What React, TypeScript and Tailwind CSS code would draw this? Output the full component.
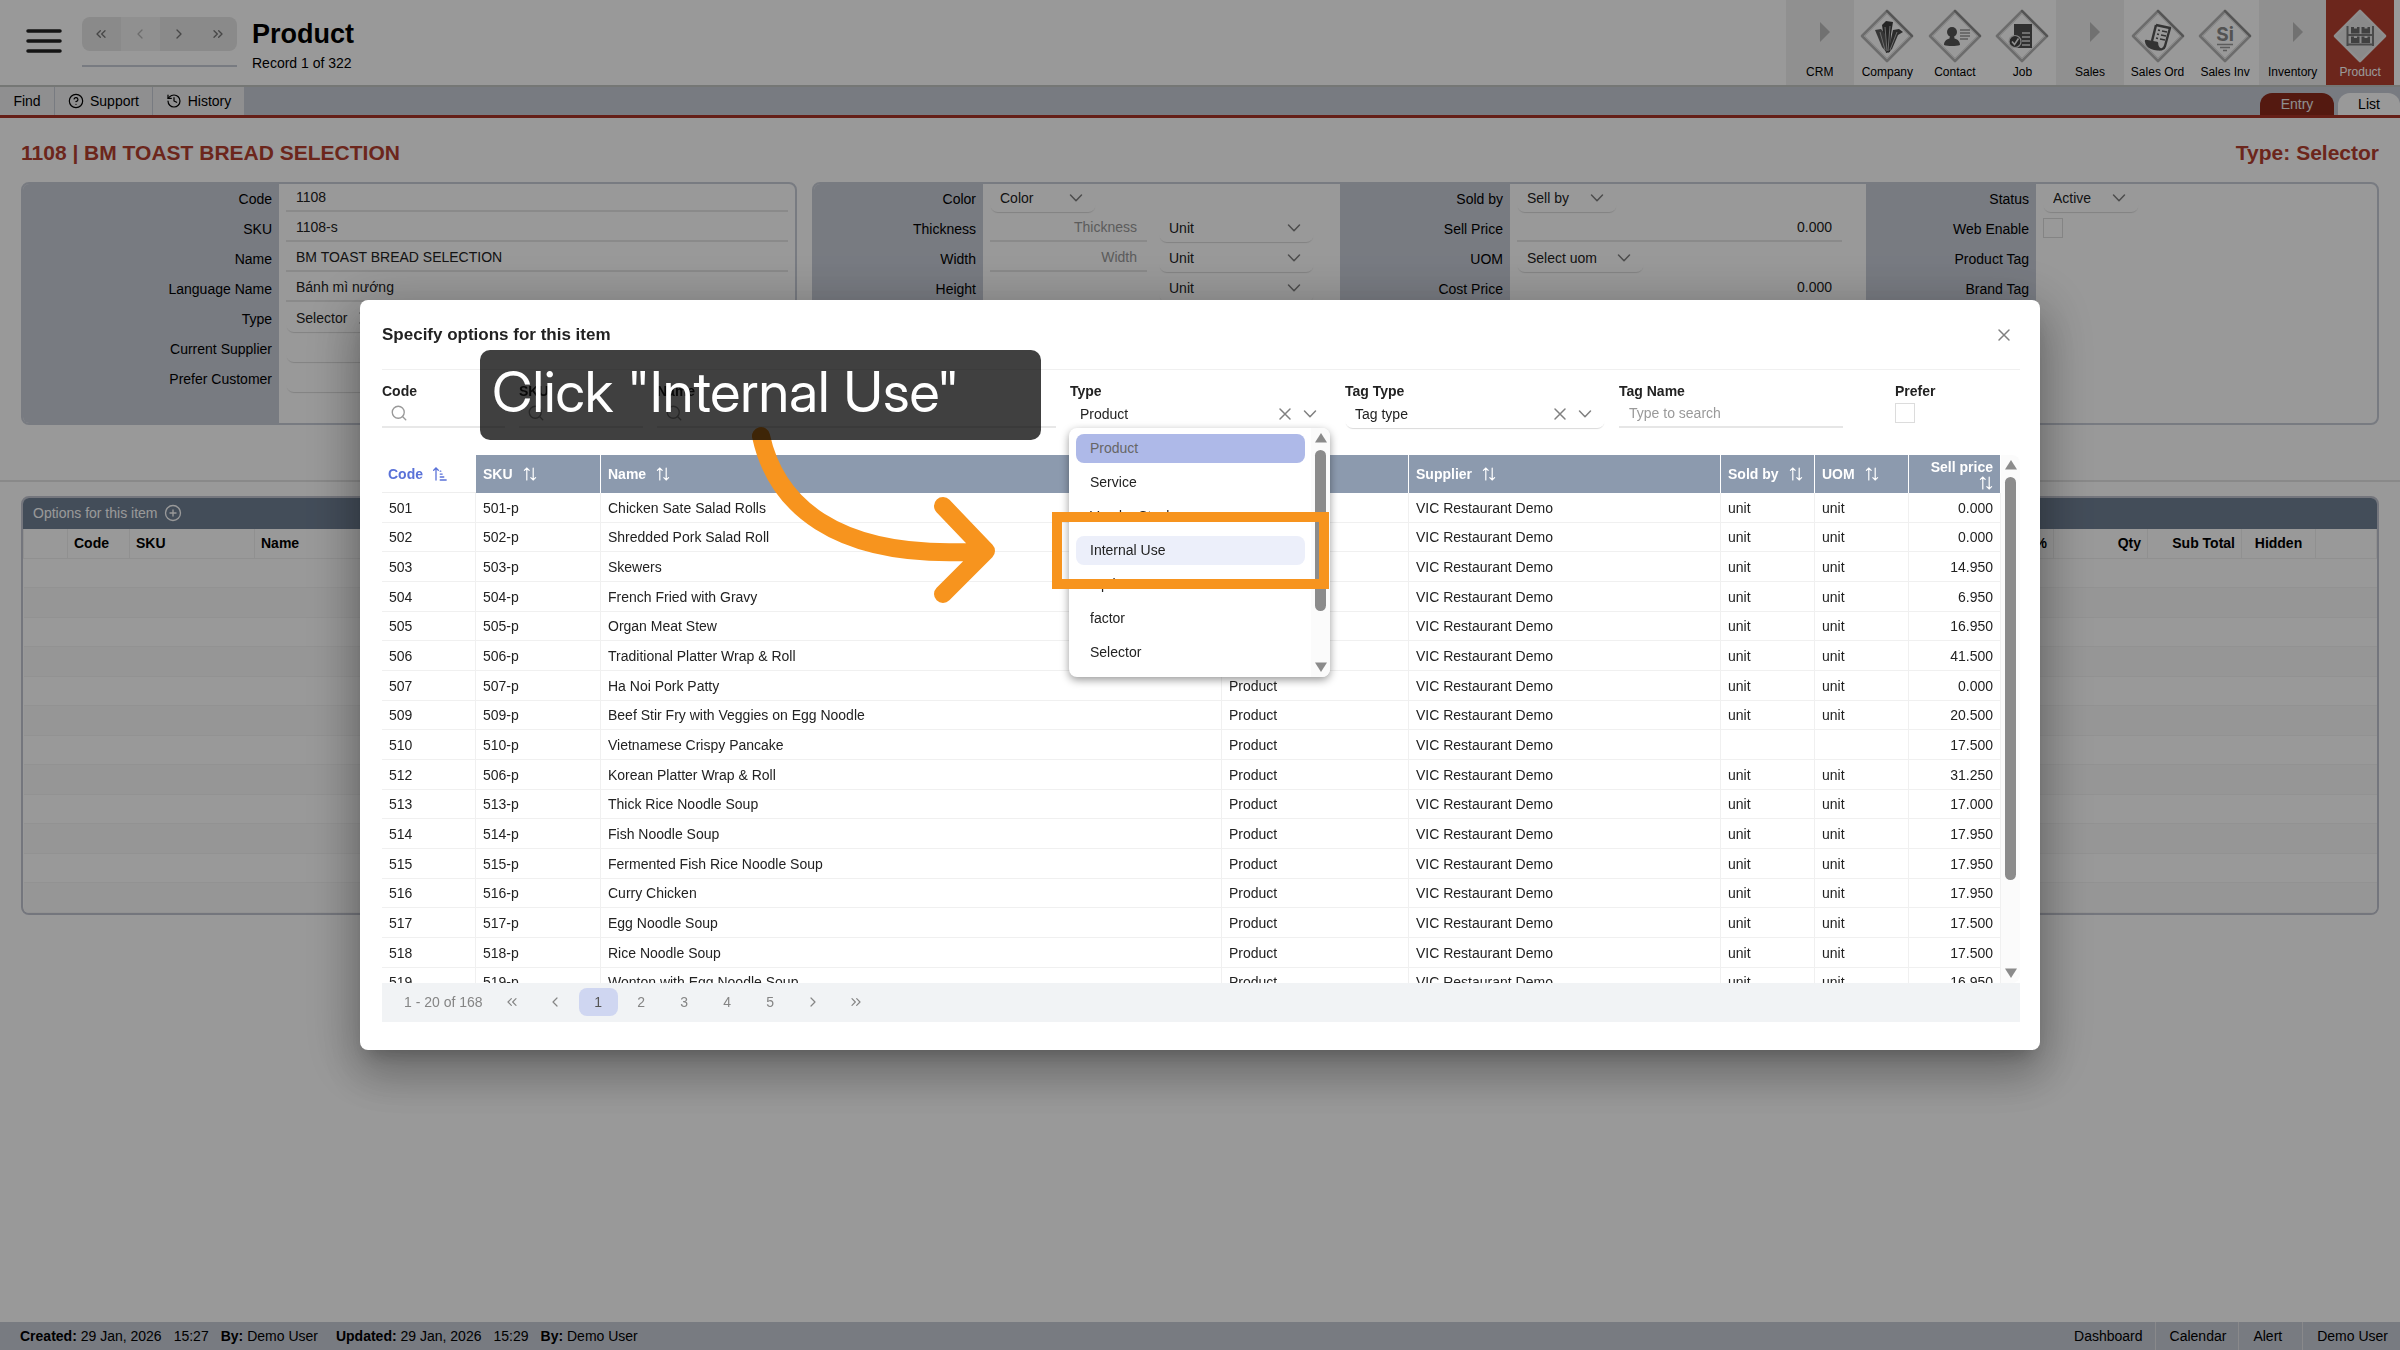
import React from "react";
import { ChevronLeft, ChevronRight, ChevronsLeft, ChevronsRight, CircleHelp, CirclePlus, History, Search } from "lucide-react";

const products: string[][] = [
  ["501", "501-p", "Chicken Sate Salad Rolls", "unit", "0.000"],
  ["502", "502-p", "Shredded Pork Salad Roll", "unit", "0.000"],
  ["503", "503-p", "Skewers", "unit", "14.950"],
  ["504", "504-p", "French Fried with Gravy", "unit", "6.950"],
  ["505", "505-p", "Organ Meat Stew", "unit", "16.950"],
  ["506", "506-p", "Traditional Platter Wrap & Roll", "unit", "41.500"],
  ["507", "507-p", "Ha Noi Pork Patty", "unit", "0.000"],
  ["509", "509-p", "Beef Stir Fry with Veggies on Egg Noodle", "unit", "20.500"],
  ["510", "510-p", "Vietnamese Crispy Pancake", "", "17.500"],
  ["512", "506-p", "Korean Platter Wrap & Roll", "unit", "31.250"],
  ["513", "513-p", "Thick Rice Noodle Soup", "unit", "17.000"],
  ["514", "514-p", "Fish Noodle Soup", "unit", "17.950"],
  ["515", "515-p", "Fermented Fish Rice Noodle Soup", "unit", "17.950"],
  ["516", "516-p", "Curry Chicken", "unit", "17.950"],
  ["517", "517-p", "Egg Noodle Soup", "unit", "17.500"],
  ["518", "518-p", "Rice Noodle Soup", "unit", "17.500"],
  ["519", "519-p", "Wonton with Egg Noodle Soup", "unit", "16.950"],
];

/* ---------- icons ---------- */

function SortIcon() {
  return (
    <svg aria-hidden="true" viewBox="0 0 14 14" className="h-[14px] w-[14px] shrink-0" fill="none" stroke="currentColor" strokeWidth="1.2" strokeLinecap="round">
      <path d="M3.8 13V1M1.4 3.4 3.8 1l2.4 2.4M10.2 1v12M7.8 10.6l2.4 2.4 2.4-2.4" />
    </svg>
  );
}

function SortAmountIcon() {
  return (
    <svg aria-hidden="true" viewBox="0 0 14 14" className="h-[14px] w-[14px] shrink-0" fill="none" stroke="currentColor" strokeWidth="1.3" strokeLinecap="round">
      <path d="M3 13V1M.7 3.3 3 1l2.3 2.3M7.2 4.2h.6M7.2 7.1h2M7.2 10h3.6M7.2 13h6" />
    </svg>
  );
}

function DownIcon({ className }: { className: string }) {
  return (
    <svg aria-hidden="true" viewBox="0 0 16 16" className={`h-4 w-4 text-[#808080] ${className}`} fill="none" stroke="currentColor" strokeWidth="1.5" strokeLinecap="round" strokeLinejoin="round">
      <path d="M2.5 5 8 10.800 13.500 5" />
    </svg>
  );
}

function CrossIcon({ className }: { className: string }) {
  return (
    <svg aria-hidden="true" viewBox="0 0 16 16" className={`h-4 w-4 text-[#808080] ${className}`} fill="none" stroke="currentColor" strokeWidth="1.5" strokeLinecap="round">
      <path d="M3 3l10 10M13 3 3 13" />
    </svg>
  );
}

function Diamond({ children, solid }: { children: React.ReactNode; solid?: boolean }) {
  return (
    <svg aria-hidden="true" viewBox="0 0 56 56" className="h-[56px] w-[56px]">
      <path d="M28 3 53 28 28 53 3 28Z" fill={solid ? "#e6e6e6" : "none"} stroke={solid ? "#ededed" : "#b4b4b4"} strokeWidth="2.6" strokeLinejoin="round" />
      {!solid && <path d="M28 3 53 28" stroke="#8c8c8c" strokeWidth="2.4" strokeLinecap="round" />}
      {!solid && <path d="M28 5.8 50.2 28 28 50.2 5.8 28Z" fill="none" stroke="#e0e0e0" strokeWidth="1" />}
      {children}
    </svg>
  );
}

const companyArt = (
  <g>
    <path d="M23 17l4-4 7 1-2 12-1 18-4 1-2-14z" fill="#3f3f3f" />
    <path d="M16 22l6-1 4 5 2 19-5-6z" fill="#5a5a5a" />
    <path d="M34 22l6-1 4 3-5 3-6 14-4 4z" fill="#4a4a4a" />
    <path d="M26 19l2 24M31 18l-2 25M21 24l5 18M38 24l-7 18" stroke="#b5b5b5" strokeWidth="1" fill="none" />
  </g>
);
const contactArt = (
  <g>
    <circle cx="25" cy="24" r="5" fill="#555" />
    <path d="M17 37c0-5 4-6 5.500-6.500L23 27h4l.5 3.500C29 31 33 32 33 37c-4 1.400-12 1.400-16 0z" fill="#555" />
    <path d="M33 22h10M33 25h10M33 28h10M33 31h8" stroke="#999" strokeWidth="1.400" />
  </g>
);
const jobArt = (
  <g>
    <path d="M20 16h18v24H20z" fill="#505050" />
    <path d="M28 25h8M28 29h8M28 33h8M28 37h8" stroke="#ddd" strokeWidth="1.500" />
    <circle cx="21" cy="33.500" r="6" fill="#444" stroke="#ddd" strokeWidth="1.200" />
    <path d="M18 33.500l2.500 3 4-6" fill="none" stroke="#eee" strokeWidth="1.600" />
  </g>
);
const orderArt = (
  <g fill="none" stroke="#555" strokeWidth="2.400" strokeLinejoin="round">
    <path d="M26 17l14 3-5 18c-1 3-4 4-6 3" />
    <path d="M26 17l-4 16" />
    <path d="M16 33l11 2c0 3 1 5 3 6-5 1-13-1-14-8z" fill="#555" />
    <path d="M28 22l2 .5m2 .5 5 1M27 26l2 .5m2 .5 5 1M26 30l2 .5m2 .5 5 1" strokeWidth="1.500" />
  </g>
);
const invoiceArt = (
  <g>
    <text x="28" y="33" textAnchor="middle" fontFamily="Inter, sans-serif" fontWeight="700" fontSize="19" fill="#8a8a8a">Si</text>
    <path d="M20 36.500h16M23 39.500h10M26 42.500h4" stroke="#999" strokeWidth="1.300" />
  </g>
);
const productArt = (
  <g>
    <path d="M15.500 18v20M41 18v20M15 27h27M15 36.500h27" stroke="#7c7c7c" strokeWidth="2" />
    <path d="M19 19h3v1.500h3V19h2.500v6.500H19zM29.500 19h3v1.500h3V19H38v6.500h-8.500zM19 28.500h3V30h3v-1.500h2.500V35H19zM29.500 28.500h3V30h3v-1.500H38V35h-8.500z" fill="#6b6b6b" />
  </g>
);

const modules: { name: string; art?: React.ReactNode; active?: boolean }[] = [
  { name: "CRM" },
  { name: "Company", art: companyArt },
  { name: "Contact", art: contactArt },
  { name: "Job", art: jobArt },
  { name: "Sales" },
  { name: "Sales Ord", art: orderArt },
  { name: "Sales Inv", art: invoiceArt },
  { name: "Inventory" },
  { name: "Product", art: productArt, active: true },
];

/* ---------- form pieces ---------- */

const lineInput = "h-[28px] border-b-2 border-[#e6e6e6] bg-transparent px-2.5 outline-none placeholder:text-[#999]";

function Pick({ id, value, width, clear, bare }: { id: string; value: string; width: string; clear?: boolean; bare?: boolean }) {
  return (
    <div className={`relative h-[28px] rounded-lg ${bare ? "" : "shadow-[0_2px_1px_-1px_#dadada]"} ${width}`}>
      <select id={id} aria-label={id} defaultValue={value} className="h-full w-full appearance-none bg-transparent pl-2.5 pr-8 outline-none">
        <option>{value}</option>
      </select>
      {clear && <CrossIcon className="pointer-events-none absolute right-[37px] top-1.5" />}
      <DownIcon className="pointer-events-none absolute right-3 top-1.5" />
    </div>
  );
}

function Tick({ id }: { id: string }) {
  return <input id={id} type="checkbox" className="block h-5 w-5 appearance-none border border-[#dcdcdc] bg-white" />;
}

function Fields({ rows, labels, className }: { rows: [string, string, React.ReactNode][]; labels: string; className?: string }) {
  return (
    <div className={`flex ${className ?? ""}`}>
      <div className={`shrink-0 bg-[#c8cdd8] ${labels}`}>
        {rows.map(([id, label]) => (
          <label key={label} htmlFor={id} className="flex h-[30px] items-center justify-end pr-[7px] text-black">{label}</label>
        ))}
      </div>
      <div className="min-w-0 flex-1 px-[7px]">
        {rows.map(([, label, field]) => (
          <div key={label} className="flex h-[30px] items-start">{field}</div>
        ))}
      </div>
    </div>
  );
}

const measure = (id: string, label: string): [string, string, React.ReactNode] => [
  id,
  label,
  <>
    <input id={id} placeholder={label === "Height" ? "" : label} className={`${lineInput} w-[157px] text-right`} />
    <div className="ml-3"><Pick id={`${id}-unit`} value="Unit" width="w-[155px]" /></div>
  </>,
];

/* ---------- page ---------- */

function Header() {
  return (
    <header className="flex h-[87px] items-stretch border-b-2 border-[#c4c7c4]">
      <button aria-label="Menu" className="ml-[22px] mr-4 flex h-[82px] w-11 items-center justify-center text-[#222]">
        <svg aria-hidden="true" viewBox="0 0 36 26" className="h-[26px] w-9"><path d="M2 3h32M2 13h32M2 23h32" stroke="#222" strokeWidth="3.500" strokeLinecap="round" /></svg>
      </button>
      <div className="w-[155px]">
        <div className="mt-[17px] grid h-[34px] grid-cols-4 overflow-hidden rounded-lg bg-[#e6e6e6] text-[#777]">
          <button aria-label="First record" className="flex items-center justify-center"><ChevronsLeft className="h-4 w-4" /></button>
          <button aria-label="Previous record" className="flex items-center justify-center bg-[#f1f1f1] text-[#b5b5b5]"><ChevronLeft className="h-4 w-4" /></button>
          <button aria-label="Next record" className="flex items-center justify-center"><ChevronRight className="h-4 w-4" /></button>
          <button aria-label="Last record" className="flex items-center justify-center"><ChevronsRight className="h-4 w-4" /></button>
        </div>
        <div className="mt-3.5 h-0.5 bg-[#c8cdd8]" />
      </div>
      <div className="ml-[15px] pt-[18px] text-black">
        <h1 className="text-[27px] font-bold leading-8">Product</h1>
        <p className="mt-1 leading-[18px]">Record 1 of 322</p>
      </div>
      <nav className="ml-auto mr-1.5 grid w-[608px] grid-cols-9">
        {modules.map((m) => (
          <a key={m.name} href={`#${m.name}`} className={`flex flex-col items-center pt-2 text-[12px] leading-4 ${m.active ? "bg-[#b5402f] text-white" : m.art ? "text-black" : "bg-[#f1f1f1] text-black"}`}>
            {m.art ? (
              <Diamond solid={m.active}>{m.art}</Diamond>
            ) : (
              <svg aria-hidden="true" viewBox="0 0 56 56" className="h-[56px] w-[56px]"><path d="M28 14l10 10-10 10z" fill="#bcbcbc" /></svg>
            )}
            <span>{m.name}</span>
          </a>
        ))}
      </nav>
    </header>
  );
}

function Toolbar() {
  return (
    <div className="flex h-[31px] items-end justify-between border-b-[3px] border-[#a83527] bg-[#c8cdd8] text-black">
      <div className="flex h-full gap-px">
        <button className="w-[54px] bg-[#efeff1]">Find</button>
        <button className="flex w-[97px] items-center justify-center gap-1.5 bg-[#efeff1]"><CircleHelp className="h-4 w-4" strokeWidth={1.8} />Support</button>
        <button className="flex w-[91px] items-center justify-center gap-1.5 bg-[#efeff1]"><History className="h-4 w-4" strokeWidth={1.8} />History</button>
      </div>
      <div className="flex h-[22px] gap-1">
        <button className="w-[74px] rounded-t-xl bg-[#8d2a1c] text-[#eee]">Entry</button>
        <button className="w-[62px] rounded-t-xl bg-white">List</button>
      </div>
    </div>
  );
}

function OptionsPanel() {
  return (
    <section className="mx-[21px] overflow-hidden rounded-lg border-2 border-[#c2c5d0]">
      <div className="flex h-[31px] items-center gap-1.5 bg-[#708095] pb-px pl-2.5 text-white">
        <h3>Options for this item</h3>
        <button aria-label="Add option"><CirclePlus className="h-[18px] w-[18px]" strokeWidth={1.8} /></button>
      </div>
      <table className="w-full table-fixed border-collapse text-black">
        <colgroup>
          <col className="w-[44px]" /><col className="w-[62px]" /><col className="w-[125px]" /><col /><col className="w-[200px]" /><col className="w-[94px]" /><col className="w-[94px]" /><col className="w-[74px]" /><col className="w-[61px]" />
        </colgroup>
        <thead>
          <tr className="h-[29px] font-bold [&>th]:border [&>th]:border-t-0 [&>th]:border-[#f0f0f0] [&>th]:px-1.5">
            <th />
            <th className="text-left">Code</th>
            <th className="text-left">SKU</th>
            <th className="text-left">Name</th>
            <th className="text-right">Disc %</th>
            <th className="text-right">Qty</th>
            <th className="text-right">Sub Total</th>
            <th>Hidden</th>
            <th />
          </tr>
        </thead>
        <tbody>
          {Array.from({ length: 12 }, (_, i) => (
            <tr key={i} className="border-b border-[#f4f4f4] odd:h-[29px] even:h-[30px] even:bg-[#fbfbfb]"><td colSpan={9} /></tr>
          ))}
        </tbody>
      </table>
    </section>
  );
}

function Footer() {
  const links = ["Dashboard", "Calendar", "Alert", "Demo User"];
  return (
    <footer className="flex h-[28px] items-center bg-[#c8cdd8] pl-5 text-black">
      <p className="flex gap-3">
        <span><b>Created:</b> 29 Jan, 2026</span><span>15:27</span><span className="mr-1.5"><b>By:</b> Demo User</span>
        <span><b>Updated:</b> 29 Jan, 2026</span><span>15:29</span><span><b>By:</b> Demo User</span>
      </p>
      <nav className="ml-auto flex h-full divide-x divide-[#e4e4e8]">
        {links.map((l) => (
          <a key={l} href={`#${l}`} className={`flex items-center ${l === "Alert" ? "pl-3.5 pr-5" : "pl-3.5 pr-3"}`}>{l}</a>
        ))}
      </nav>
    </footer>
  );
}

/* ---------- dialog ---------- */

function Field({ id, label, children }: { id: string; label: string; children: React.ReactNode }) {
  return (
    <div className="relative pr-3.5">
      <label htmlFor={id} className="block h-[18px] font-bold leading-[18px] text-[#222]">{label}</label>
      {children}
    </div>
  );
}

function SearchBox({ id }: { id: string }) {
  return (
    <div className="relative">
      <input id={id} className="h-[28px] w-full border-b-2 border-[#e8e8e8] pl-8 outline-none" />
      <Search aria-hidden="true" className="absolute left-2 top-1 h-[18px] w-[18px] text-[#999]" strokeWidth={1.8} />
    </div>
  );
}

function ScrollBar({ thumb }: { thumb: string }) {
  return (
    <div aria-hidden="true" className="flex w-[19px] shrink-0 flex-col items-center rounded-r-lg bg-[#fbfbfb] py-[5px] text-[#8b8b8b]">
      <svg viewBox="0 0 12 10" className="h-2.5 w-3"><path d="M6 0l6 9.500H0z" fill="currentColor" /></svg>
      <div className={`mt-[7px] w-[11px] rounded-full bg-[#8b8b8b] ${thumb}`} />
      <svg viewBox="0 0 12 10" className="mt-auto h-2.5 w-3"><path d="M0 .5h12L6 10z" fill="currentColor" /></svg>
    </div>
  );
}

const typeOptions = ["Product", "Service", "Vendor Stock", "Internal Use", "Options", "factor", "Selector"];

function TypeMenu() {
  return (
    <div className="absolute -left-px top-[46px] z-10 flex h-[249px] w-[261px] rounded-lg bg-white shadow-[0_3px_8px_rgba(0,0,0,0.4)]">
      <div role="listbox" aria-label="Type" className="flex-1 space-y-[5px] py-1.5 pl-[7px] pr-1.5">
        {typeOptions.map((o) => (
          <button
            key={o}
            role="option"
            aria-selected={o === "Product"}
            className={`relative block h-[29px] w-full rounded-lg pb-0.5 pl-3.5 text-left ${o === "Product" ? "bg-[#aeb9e8] text-[#666]" : o === "Internal Use" ? "z-10 bg-[#eceffa]" : ""}`}
          >
            {o}
            {o === "Internal Use" && <span className="pointer-events-none absolute -bottom-6 -left-6 -right-6 -top-6 border-10 border-[#f7941e]" />}
          </button>
        ))}
      </div>
      <ScrollBar thumb="h-[161px]" />
    </div>
  );
}

function Head({ children, stacked }: { children: string; stacked?: boolean }) {
  return (
    <th className={`border-r border-white bg-[#8c9aae] px-[7px] font-bold text-white ${stacked ? "text-right" : "text-left"}`}>
      <span className={stacked ? "flex flex-col items-end leading-[18px]" : "flex items-center gap-2.5"}>{children}<SortIcon /></span>
    </th>
  );
}

function ProductTable() {
  return (
    <div className="flex h-[528px] overflow-hidden">
      <div className="min-w-0 flex-1 overflow-hidden">
        <table className="w-full table-fixed border-separate border-spacing-0">
          <colgroup>
            <col className="w-[94px]" /><col className="w-[125px]" /><col /><col className="w-[187px]" /><col className="w-[312px]" /><col className="w-[94px]" /><col className="w-[94px]" /><col className="w-[92px]" />
          </colgroup>
          <thead>
            <tr className="h-[38px]">
              <th className="border-b border-[#eee] px-1.5 text-left font-bold text-[#5a72d8]"><span className="flex items-center gap-2.5">Code<SortAmountIcon /></span></th>
              <Head>SKU</Head>
              <Head>Name</Head>
              <Head>Type</Head>
              <Head>Supplier</Head>
              <Head>Sold by</Head>
              <Head>UOM</Head>
              <Head stacked>Sell price</Head>
            </tr>
          </thead>
          <tbody>
            {products.map(([code, sku, name, unit, price]) => (
              <tr key={code} className="h-[30px] [&:nth-child(3n+2)]:h-[29px] [&>td]:border-b [&>td]:border-r [&>td]:border-[#f0f0f0] [&>td]:px-[7px] [&>td]:leading-5">
                <td>{code}</td>
                <td>{sku}</td>
                <td>{name}</td>
                <td>Product</td>
                <td>VIC Restaurant Demo</td>
                <td>{unit}</td>
                <td>{unit}</td>
                <td className="text-right">{price}</td>
              </tr>
            ))}
          </tbody>
        </table>
      </div>
      <ScrollBar thumb="h-[403px]" />
    </div>
  );
}

function Pager() {
  const cell = "flex h-[28px] w-[39px] items-center justify-center rounded-lg";
  return (
    <nav aria-label="Pages" className="flex h-[39px] items-center gap-1 bg-[#f1f3f5] pb-0.5 pl-[22px] text-[#858585]">
      <span className="mr-1.5">1 - 20 of 168</span>
      <button aria-label="First page" className={cell}><ChevronsLeft className="h-4 w-4" strokeWidth={1.8} /></button>
      <button aria-label="Previous page" className={cell}><ChevronLeft className="h-4 w-4" strokeWidth={1.8} /></button>
      {["1", "2", "3", "4", "5"].map((p) => (
        <button key={p} className={`${cell} ${p === "1" ? "bg-[#cfd6f1] text-[#555]" : ""}`}>{p}</button>
      ))}
      <button aria-label="Next page" className={cell}><ChevronRight className="h-4 w-4" strokeWidth={1.8} /></button>
      <button aria-label="Last page" className={cell}><ChevronsRight className="h-4 w-4" strokeWidth={1.8} /></button>
    </nav>
  );
}

function Dialog() {
  return (
    <div role="dialog" aria-labelledby="dialog-title" className="relative w-[70%] rounded-lg bg-white pb-7 pl-[22px] pr-5 shadow-[0_12px_17px_-8px_rgba(0,0,0,0.2),0_27px_43px_3px_rgba(0,0,0,0.14),0_10px_52px_9px_rgba(0,0,0,0.22)]">
      <div className="flex h-[69px] items-center justify-between pr-1">
        <h2 id="dialog-title" className="text-[17px] font-bold">Specify options for this item</h2>
        <button aria-label="Close" className="p-1"><CrossIcon className="" /></button>
      </div>
      <div className="border-t border-[#f0f0f0]">
        <div className="grid h-[85px] grid-cols-[137fr_138fr_413fr_275fr_274fr_276fr_125fr] pt-3">
          <Field id="f-code" label="Code"><SearchBox id="f-code" /></Field>
          <Field id="f-sku" label="SKU"><SearchBox id="f-sku" /></Field>
          <Field id="f-name" label="Name"><SearchBox id="f-name" /></Field>
          <Field id="f-type" label="Type"><Pick id="f-type" value="Product" width="w-[260px]" clear bare /><TypeMenu /></Field>
          <Field id="f-tagtype" label="Tag Type"><Pick id="f-tagtype" value="Tag type" width="w-[260px]" clear /></Field>
          <Field id="f-tagname" label="Tag Name"><input id="f-tagname" placeholder="Type to search" className={`${lineInput} w-[224px]`} /></Field>
          <Field id="f-prefer" label="Prefer"><div className="pt-[3px]"><Tick id="f-prefer" /></div></Field>
        </div>
        <ProductTable />
      </div>
      <Pager />

      <svg aria-hidden="true" viewBox="0 0 260 190" className="pointer-events-none absolute left-[386px] top-[121px] z-20 h-[190px] w-[260px]" fill="none" stroke="#f7941e" strokeWidth="18" strokeLinecap="round" strokeLinejoin="round">
        <path d="M15 15C29 79 84 141 238 130M197 85l43 45-43 43" />
      </svg>
      <div className="absolute left-[120px] top-[50px] z-20 h-[90px] w-[561px] rounded-[10px] bg-black/75 px-3 font-['Inter_Display','Inter',sans-serif] text-[56px] leading-[84px] text-white">
        Click "Internal Use"
      </div>
    </div>
  );
}

export default function App() {
  return (
    <div className="flex min-h-screen flex-col bg-white font-['Liberation_Sans',Arial,sans-serif] text-[14px] leading-5 text-[#222]">
      <Header />
      <Toolbar />
      <main className="flex-1">
        <div className="flex h-16 items-center justify-between px-[21px] pt-1.5 text-[21px] font-bold text-[#b5402f]">
          <h2>1108 | BM TOAST BREAD SELECTION</h2>
          <p>Type: Selector</p>
        </div>
        <div className="flex gap-[15px] px-[21px]">
          <section className="w-[776px] overflow-hidden rounded-lg border-2 border-[#c8cdd8]">
            <Fields
              className="h-[239px]"
              labels="w-[256px]"
              rows={[
                ["code", "Code", <input id="code" defaultValue="1108" className={`${lineInput} w-full`} />],
                ["sku", "SKU", <input id="sku" defaultValue="1108-s" className={`${lineInput} w-full`} />],
                ["name", "Name", <input id="name" defaultValue="BM TOAST BREAD SELECTION" className={`${lineInput} w-full`} />],
                ["language", "Language Name", <input id="language" defaultValue="Bánh mì nướng" className={`${lineInput} w-full`} />],
                ["type", "Type", <Pick id="type" value="Selector" width="w-[124px]" clear />],
                ["supplier", "Current Supplier", <Pick id="supplier" value="" width="w-full" />],
                ["customer", "Prefer Customer", <Pick id="customer" value="" width="w-full" />],
              ]}
            />
          </section>
          <section className="flex flex-1 overflow-hidden rounded-lg border-2 border-[#c8cdd8]">
            <Fields
              className="w-[526px] shrink-0"
              labels="w-[169px]"
              rows={[
                ["color", "Color", <Pick id="color" value="Color" width="w-[106px]" />],
                measure("thickness", "Thickness"),
                measure("width", "Width"),
                measure("height", "Height"),
              ]}
            />
            <Fields
              className="w-[526px] shrink-0"
              labels="w-[170px]"
              rows={[
                ["sold", "Sold by", <Pick id="sold" value="Sell by" width="w-[100px]" />],
                ["sell", "Sell Price", <input id="sell" defaultValue="0.000" className={`${lineInput} w-[325px] text-right`} />],
                ["uom", "UOM", <Pick id="uom" value="Select uom" width="w-[127px]" />],
                ["cost", "Cost Price", <input id="cost" defaultValue="0.000" className={`${lineInput} w-[325px] text-right`} />],
              ]}
            />
            <Fields
              className="flex-1"
              labels="w-[170px]"
              rows={[
                ["status", "Status", <Pick id="status" value="Active" width="w-[96px]" />],
                ["web", "Web Enable", <div className="pt-1"><Tick id="web" /></div>],
                ["ptag", "Product Tag", null],
                ["btag", "Brand Tag", null],
              ]}
            />
          </section>
        </div>
        <div className="mb-[14px] mt-[55px] h-0.5 bg-[#e4e4e4]" />
        <OptionsPanel />
      </main>
      <Footer />
      <div className="fixed inset-0 flex items-center justify-center bg-black/40">
        <Dialog />
      </div>
    </div>
  );
}
